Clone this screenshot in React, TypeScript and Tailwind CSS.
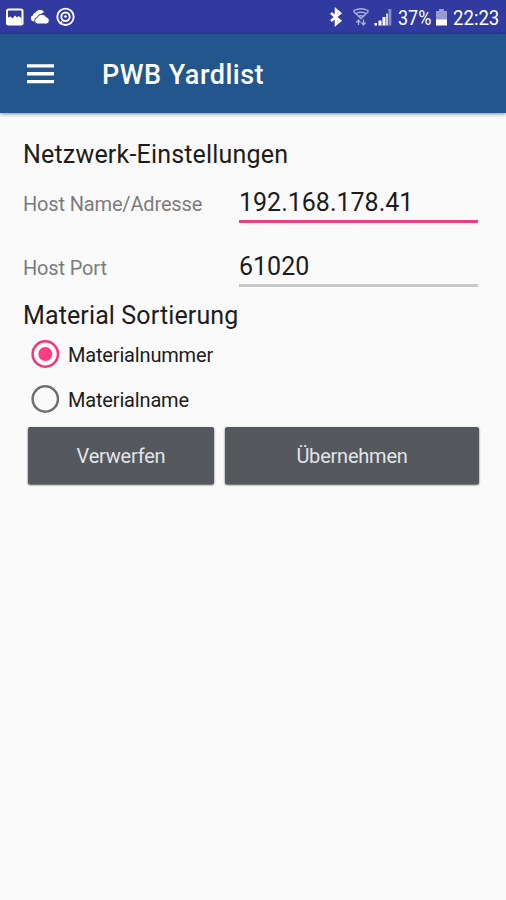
import React, { useState } from 'react';

const StatusBar: React.FC = () => (
  <div className="flex h-[34px] items-center bg-[#303a9f] text-white">
    <svg className="h-[34px] w-20" viewBox="0 0 80 34" fill="none">
      <rect x="7" y="9.500" width="15.500" height="15" rx="1.500" stroke="#fff" strokeWidth="2" />
      <path d="M8 17.500l2.500-1 2 2 2.500-3 2 2 1.500-1.500 3 2v6.500H8z" fill="#fff" />
      <path d="M33.500 21.500a3.200 3.200 0 0 1-.5-6.200 3.200 3.200 0 0 1 2.500-2.800 5 5 0 0 1 8.500-.5l-6 4-3 5.500z" fill="#fff" />
      <path d="M37.500 24a3.300 3.300 0 0 1-.3-6.500 5 5 0 0 1 9.200-.5 3.600 3.600 0 0 1 .3 7z" fill="#fff" stroke="#303a9f" strokeWidth="1" />
      <circle cx="65.500" cy="16.800" r="8.200" stroke="#fff" strokeWidth="1.900" />
      <circle cx="65.500" cy="16.800" r="4.200" stroke="#fff" strokeWidth="2" />
      <circle cx="65.500" cy="16.500" r="1.300" fill="#fff" />
      <path d="M62 21.500l-2 2.500" stroke="#fff" strokeWidth="1.600" />
    </svg>
    <svg className="ml-auto h-[34px] w-[72px]" viewBox="326 0 72 34" fill="none">
      <path d="M331 13l9 7.800-4 3.400V9.800l4 3.400-9 7.800" stroke="#fff" strokeWidth="2.600" />
      <g stroke="#a9b0dc" strokeWidth="1.300">
        <path d="M354 12v-1.500q7-3.500 14 0v1.500l-7 6.500z" />
        <path d="M356 13.500q5-2.500 10 0M358 16.500q3-1.500 6 0" />
        <path d="M358.500 25v-5M356.500 22.500l2-2.500 2 2.500M363.500 19.500v5M361.500 22.500l2 2.500 2-2.500" />
      </g>
      <path d="M374.500 23h2.500v2.500h-2.500zM378.500 20.500h3v5h-3zM382.500 17h3v8.500h-3z" fill="#fff" />
      <path d="M386 13.500h2v12h-2z" fill="#fff" opacity=".75" />
      <path d="M388.500 9h2.800v16.500h-2.800z" fill="#8990cc" />
    </svg>
    <span className="w-[35px] origin-left scale-x-[.9] pt-px text-[20px] leading-[34px] whitespace-nowrap">37%</span>
    <svg className="h-[34px] w-[20px]" viewBox="433 0 20 34">
      <path d="M439 9h5v2h3v9h-11v-9h3z" fill="#979dd2" />
      <path d="M436 19.500h11v6h-11z" fill="#fff" />
    </svg>
    <span className="w-[53px] origin-left scale-x-[.93] pt-px text-[20px] leading-[34px] whitespace-nowrap">22:23</span>
  </div>
);

const AppBar: React.FC = () => (
  <header className="flex h-[79px] items-center bg-[#22568c] pl-[27px] text-white shadow-[0_1px_4px_rgba(0,0,0,0.45)]">
    <button aria-label="Menu">
      <svg className="h-5 w-[27px]" viewBox="0 0 27 20" fill="#fff">
        <path d="M0 .2h27v3.400H0zM0 8h27v3.400H0zM0 15.900h27v3.400H0z" />
      </svg>
    </button>
    <h1 className="ml-12 pt-0.5 text-[27px] leading-8 font-medium tracking-[0.5px]">PWB Yardlist</h1>
  </header>
);

interface FieldProps {
  label: string;
  value: string;
  active?: boolean;
  onChange: (value: string) => void;
}

const Field: React.FC<FieldProps> = ({ label, value, active, onChange }) => (
  <label className="flex h-16 items-start">
    <span className="w-[216px] pt-0.5 text-[20px] leading-8 tracking-[-0.16px] text-[#7c7c7c]">{label}</span>
    <input
      value={value}
      onChange={(e) => onChange(e.target.value)}
      className={`h-[37px] w-[239px] border-b-[3px] pb-0.5 text-[25px] leading-8 text-[#1c1c1c] outline-none ${
        active ? 'border-[#f13d7d]' : 'border-[#c8c8c8]'
      }`}
    />
  </label>
);

interface RadioProps {
  label: string;
  checked: boolean;
  onSelect: () => void;
}

const Radio: React.FC<RadioProps> = ({ label, checked, onSelect }) => (
  <button role="radio" aria-checked={checked} onClick={onSelect} className="flex h-[45px] items-center gap-[9px] pl-2">
    <svg className="size-7" viewBox="0 0 28 28" fill="none">
      <circle cx="14.300" cy="14" r="12.700" stroke={checked ? '#f73378' : '#707070'} strokeWidth="2.500" />
      {checked && <circle cx="14.300" cy="14" r="7" fill="#ff3d80" />}
    </svg>
    <span className="pt-0.5 text-[20px] leading-7 tracking-[-0.17px] text-[#1c1c1c]">{label}</span>
  </button>
);

const App: React.FC = () => {
  const [host, setHost] = useState('192.168.178.41');
  const [port, setPort] = useState('61020');
  const [sort, setSort] = useState('Materialnummer');

  return (
    <div className="h-[900px] w-[506px] overflow-hidden bg-[#fafafa] font-['Roboto',sans-serif]">
      <StatusBar />
      <AppBar />
      <main className="px-[23px] pt-[26px]">
        <h2 className="mb-[15px] text-[25px] leading-8 tracking-[0.19px] text-[#1c1c1c]">Netzwerk-Einstellungen</h2>
        <Field label="Host Name/Adresse" value={host} active onChange={setHost} />
        <Field label="Host Port" value={port} onChange={setPort} />
        <h2 className="-mt-[14px] -mb-px text-[25px] leading-8 tracking-[0.12px] text-[#1c1c1c]">Material Sortierung</h2>
        <div role="radiogroup" className="flex flex-col items-start">
          {['Materialnummer', 'Materialname'].map((item) => (
            <Radio key={item} label={item} checked={sort === item} onSelect={() => setSort(item)} />
          ))}
        </div>
        <div className="mt-[6px] ml-[5px] flex gap-[11px] text-[20px] tracking-[-0.22px] text-[#e2e5e8]">
          <button className="h-[57px] w-[186px] rounded-xs bg-[#55585c] shadow-[0_1px_2px_rgba(0,0,0,0.7)]">Verwerfen</button>
          <button className="h-[57px] w-[254px] rounded-xs bg-[#55585c] shadow-[0_1px_2px_rgba(0,0,0,0.7)]">Übernehmen</button>
        </div>
      </main>
    </div>
  );
};

export default App;
